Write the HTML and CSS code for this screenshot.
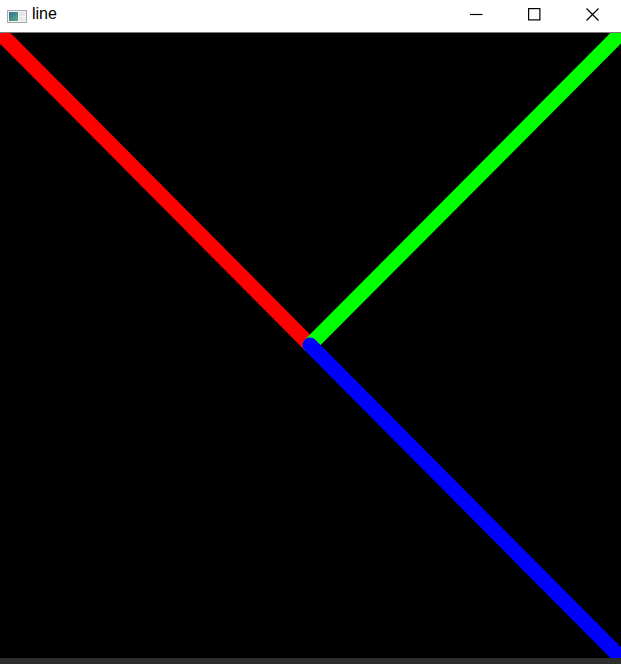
FILE: index.html
```html
<!DOCTYPE html>
<html>
<head>
<meta charset="utf-8">
<link rel="stylesheet" href="styles.css">
</head>
<body>
<div class="window">
  <div class="titlebar">
    <div class="title">
      <svg class="app-icon" width="20" height="13" viewBox="0 0 20 13">
        <defs>
          <linearGradient id="g" x1="0" y1="0" x2="1" y2="1">
            <stop offset="0" stop-color="#2f6fa8"/>
            <stop offset="1" stop-color="#5fae6e"/>
          </linearGradient>
        </defs>
        <rect x="0.5" y="0.5" width="19" height="12" fill="#f4f4f4" stroke="#a8a8a8"/>
        <rect x="2" y="2" width="9" height="9" fill="url(#g)"/>
        <rect x="12" y="2" width="6" height="4" fill="#e2e6ea"/>
        <rect x="12" y="7" width="6" height="4" fill="#e8ebee"/>
      </svg>
      <span class="title-text">line</span>
    </div>
    <div class="controls">
      <div class="ctl">
        <svg width="13" height="13" viewBox="0 0 13 13"><path d="M0 6.5H12.5" stroke="#000" stroke-width="1.2"/></svg>
      </div>
      <div class="ctl">
        <svg width="13" height="13" viewBox="0 0 13 13"><rect x="0.6" y="0.6" width="11.3" height="11.3" fill="none" stroke="#000" stroke-width="1.2"/></svg>
      </div>
      <div class="ctl">
        <svg width="13" height="13" viewBox="0 0 13 13"><path d="M0.5 0.5L12.5 12.5M12.5 0.5L0.5 12.5" stroke="#000" stroke-width="1.2"/></svg>
      </div>
    </div>
  </div>
  <div class="canvas">
    <svg class="lines" width="621" height="625" viewBox="0 0 621 625">
      <line x1="0" y1="0" x2="310" y2="312" stroke="#ff0000" stroke-width="15" stroke-linecap="round"/>
      <line x1="310" y1="312" x2="621" y2="0" stroke="#00ff00" stroke-width="15" stroke-linecap="round"/>
      <line x1="310" y1="312" x2="621" y2="625" stroke="#0000ff" stroke-width="15" stroke-linecap="round"/>
    </svg>
  </div>
  <div class="bottom"></div>
</div>
</body>
</html>
```

FILE: styles.css
```css
html, body {
  margin: 0;
  padding: 0;
  background: #000;
}
.window {
  width: 621px;
  height: 664px;
  display: flex;
  flex-direction: column;
  overflow: hidden;
}
.titlebar {
  height: 32px;
  background: #fff;
  border-bottom: 1px solid #7a7a7a;
  display: flex;
  align-items: stretch;
  justify-content: space-between;
  flex: none;
}
.title {
  display: flex;
  align-items: center;
  padding-left: 7px;
  gap: 5px;
}
.app-icon {
  display: block;
  margin-top: 1px;
}
.title-text {
  font-family: "Liberation Sans", Arial, sans-serif;
  font-size: 16px;
  color: #000;
  line-height: 1;
  margin-top: -4px;
}
.controls {
  display: flex;
}
.ctl {
  width: 58px;
  display: flex;
  align-items: center;
  justify-content: center;
  padding-bottom: 3px;
}
.ctl svg {
  display: block;
}
.canvas {
  height: 625px;
  background: #000;
  flex: none;
}
.lines {
  display: block;
}
.bottom {
  flex: 1;
  background: #2e2e2e;
}
```
